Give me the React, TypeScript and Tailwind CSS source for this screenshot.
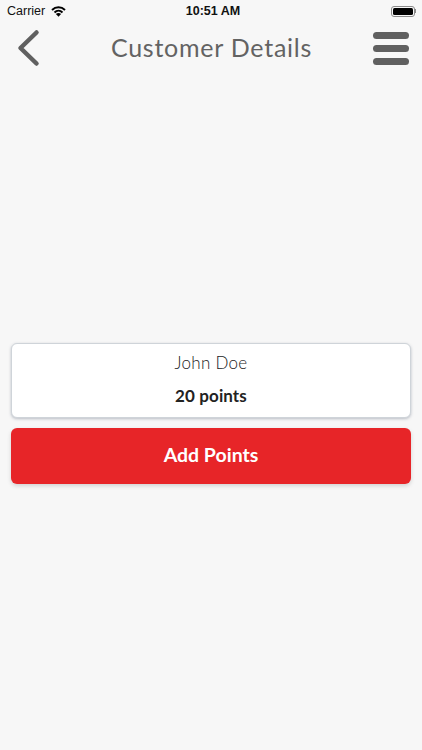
export default function App() {
  return (
    <div className="flex h-[750px] w-[422px] flex-col bg-[#f7f7f7] font-['Lato','Open_Sans',sans-serif]">
      <div className="grid h-[21px] shrink-0 grid-cols-[1fr_auto_1fr] items-center pl-[7px] pr-[6px] pt-[1px] font-['Liberation_Sans',sans-serif] text-[12.5px] text-[#111]">
        <div className="flex items-center gap-[6px]">
          <span>Carrier</span>
          <svg width="15" height="11" viewBox="0 0 15 11">
            <path d="M7.5 10.8 4.9 8.1C6.4 6.7 8.6 6.7 10.1 8.1Z" fill="#000" />
            <path d="M3.5 6.4C5.8 4.3 9.2 4.3 11.5 6.4" fill="none" stroke="#000" strokeWidth="2" />
            <path d="M1 3.9C4.7.5 10.3.5 14 3.9" fill="none" stroke="#000" strokeWidth="2" />
          </svg>
        </div>
        <span className="pl-[3px] font-semibold">10:51 AM</span>
        <div className="flex justify-end">
          <div className="flex items-center">
            <div className="h-[11px] w-[24px] rounded-[3px] border border-[#8a8a8a] p-[1px]">
              <div className="h-full w-full rounded-[1.5px] bg-black" />
            </div>
            <div className="h-[4px] w-[1px] bg-[#8a8a8a]" />
          </div>
        </div>
      </div>
      <div className="grid h-[54px] shrink-0 grid-cols-[1fr_auto_1fr] items-center pl-[14px] pr-[13px]">
        <svg className="ml-[3px]" width="24" height="38" viewBox="0 0 24 38">
          <path d="M19.5 3.5 3.5 19 19.5 34.5" fill="none" stroke="#606060" strokeWidth="4.5" strokeLinecap="round" strokeLinejoin="round" />
        </svg>
        <h1 className="text-[25px] font-normal tracking-[0.75px] text-[#636363]">Customer Details</h1>
        <div className="flex w-[36px] flex-col gap-[6px] justify-self-end">
          <div className="h-[7px] rounded-full bg-[#606060]" />
          <div className="h-[7px] rounded-full bg-[#606060]" />
          <div className="h-[7px] rounded-full bg-[#606060]" />
        </div>
      </div>
      <div className="flex flex-col gap-[10px] px-[11px] pt-[268px]">
        <div className="flex h-[75px] flex-col items-center justify-center gap-[13px] rounded-[6px] border border-[#cfd4d9] bg-white pb-[3px] shadow-[0_1px_3px_rgba(90,100,120,0.4)]">
          <span className="text-[17px] leading-[20px] font-light tracking-[0.3px] text-[#222]">John Doe</span>
          <span className="text-[17px] leading-[20px] font-bold tracking-[0.1px] text-[#222]">20 points</span>
        </div>
        <button className="h-[56px] rounded-[6px] bg-[#e72528] pb-[2px] text-[19.5px] font-bold text-white shadow-[0_2px_4px_rgba(0,0,0,0.15)]">
          Add Points
        </button>
      </div>
    </div>
  );
}
